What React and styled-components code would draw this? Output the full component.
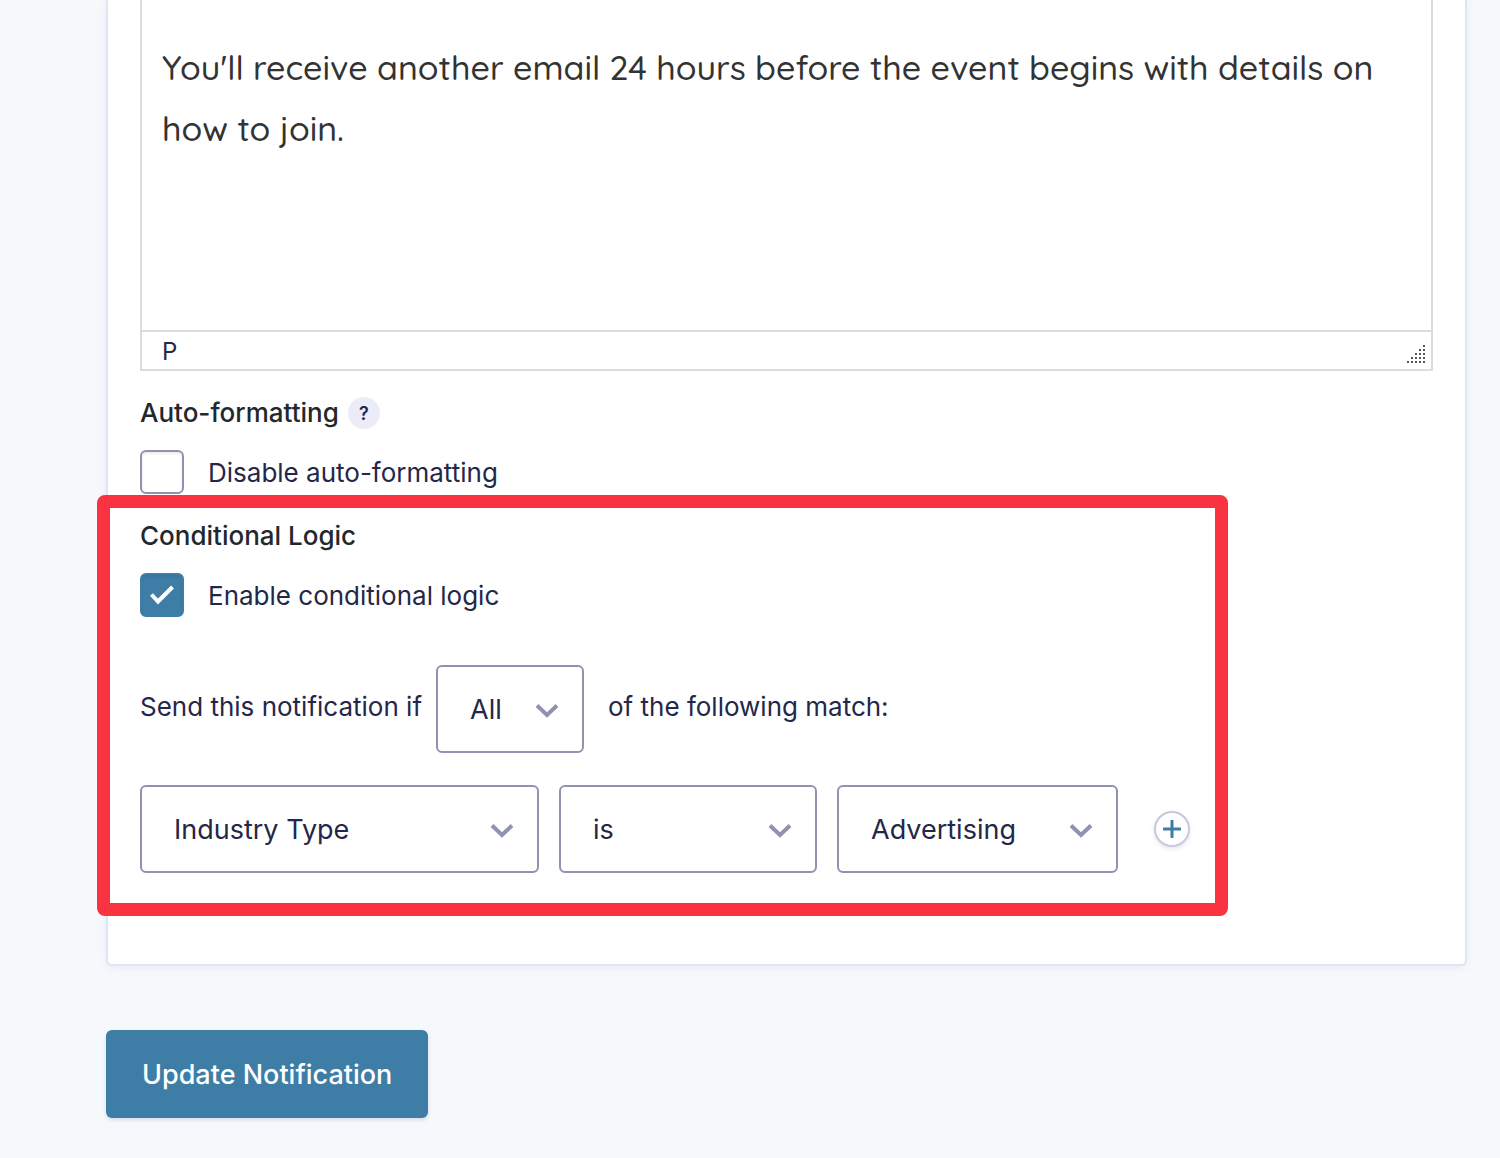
import { useState } from "react";
import styled, { createGlobalStyle } from "styled-components";

const GlobalStyle = createGlobalStyle`
    * {
        box-sizing: border-box;
    }
    body {
        margin: 0;
        background-color: #f6f9fc;
        color: #242748;
        font-family: Inter, "Liberation Sans", sans-serif;
        font-size: 26px;
        line-height: 32px;
    }
    button,
    select,
    textarea {
        font-family: inherit;
    }
`;

const Page = styled.main`
    padding: 0 33px 40px 106px;
`;

const Panel = styled.section`
    background-color: #ffffff;
    border: 2px solid #e3e5ee;
    border-top: none;
    border-radius: 0 0 6px 6px;
    box-shadow: 0 2px 8px rgba(58, 58, 135, 0.08);
    padding: 0 32px 91px;
`;

const Editor = styled.div`
    border: 2px solid #dcdcde;
    border-top: none;
`;

const Message = styled.textarea`
    display: block;
    width: 100%;
    height: 330px;
    padding: 37px 20px 0;
    border: none;
    outline: none;
    resize: none;
    background-color: transparent;
    color: #333333;
    font-family: Quicksand, Lato, sans-serif;
    font-size: 34px;
    font-weight: 500;
    line-height: 61px;
`;

const StatusBar = styled.div`
    display: flex;
    justify-content: space-between;
    align-items: center;
    height: 39px;
    padding: 2px 6px 0 20px;
    border-top: 2px solid #dcdcde;
    font-size: 24px;
    svg {
        margin-top: 4px;
    }
`;

const Setting = styled.div`
    position: relative;
    padding-top: 26px;
`;

const Heading = styled.h3`
    display: flex;
    align-items: center;
    gap: 9px;
    margin: 0 0 21px;
    color: #23282d;
    font-size: 26px;
    font-weight: 500;
    line-height: 32px;
`;

const Help = styled.button`
    width: 32px;
    height: 32px;
    padding: 0;
    border: none;
    border-radius: 50%;
    background-color: #ecebf8;
    color: #242748;
    font-size: 18px;
    font-weight: 600;
`;

const CheckRow = styled.label`
    display: flex;
    align-items: center;
    gap: 24px;
`;

const CheckText = styled.span`
    padding-top: 2px;
`;

const Tick = styled.input`
    appearance: none;
    flex: none;
    width: 44px;
    height: 44px;
    margin: 0;
    border: 2px solid #9092b2;
    border-radius: 6px;
    background-color: #ffffff;
    box-shadow: inset 0 2px 3px rgba(0, 0, 0, 0.08);
    &:checked {
        border-color: #3e7da6;
        background-color: #3e7da6;
    }
`;

const TickBox = styled.span`
    position: relative;
    display: flex;
    svg {
        position: absolute;
        inset: 0;
        pointer-events: none;
    }
`;

const Highlight = styled.div`
    position: absolute;
    inset: 1px 205px -43px -43px;
    border: 13px solid #fa3340;
    border-radius: 8px;
    pointer-events: none;
`;

const RuleText = styled.div`
    display: flex;
    align-items: center;
    margin-top: 48px;
`;

const RuleLabel = styled.span`
    padding-bottom: 4px;
    &:first-child {
        margin-right: 14px;
    }
    &:last-child {
        margin-left: 24px;
    }
`;

const Conditions = styled.div`
    display: flex;
    align-items: center;
    gap: 20px;
    margin-top: 32px;
`;

const SelectBox = styled.span`
    position: relative;
    display: flex;
    width: ${(props) => props.$width}px;
    svg {
        position: absolute;
        top: 38px;
        right: 25px;
        pointer-events: none;
    }
`;

const Select = styled.select`
    appearance: none;
    width: 100%;
    height: 88px;
    padding: 0 60px 0 32px;
    border: 2px solid #9092b2;
    border-radius: 6px;
    background-color: #ffffff;
    color: #242748;
    font-size: 27px;
`;

const AddButton = styled.button`
    display: flex;
    align-items: center;
    justify-content: center;
    width: 36px;
    height: 36px;
    margin-left: 16px;
    padding: 0;
    border: 2px solid #c8c9dd;
    border-radius: 50%;
    background-color: #ffffff;
    box-shadow: 0 2px 4px rgba(58, 58, 135, 0.12);
`;

const Submit = styled.button`
    height: 88px;
    margin-top: 64px;
    padding: 0 36px;
    border: none;
    border-radius: 6px;
    background-color: #3e7da6;
    box-shadow: 0 2px 4px rgba(58, 58, 135, 0.16);
    color: #ffffff;
    font-size: 27px;
    font-weight: 500;
`;

function ResizeGrip() {
    const dots = [];
    for (let row = 0; row < 5; row++) {
        for (let col = 4 - row; col < 5; col++) {
            dots.push([col * 4, row * 4]);
        }
    }
    return (
        <svg width="18" height="18" fill="#50575e" aria-hidden="true">
            {dots.map(([x, y]) => (
                <rect key={`${x}-${y}`} x={x} y={y} width="2" height="2" />
            ))}
        </svg>
    );
}

function Checkbox({ label, checked, onChange }) {
    return (
        <CheckRow>
            <TickBox>
                <Tick
                    type="checkbox"
                    checked={checked}
                    onChange={(e) => onChange(e.target.checked)}
                />
                {checked && (
                    <svg width="44" height="44" fill="none">
                        <path
                            d="M11.5 21.5 L18 28.5 L32.5 14"
                            stroke="#ffffff"
                            strokeWidth="4"
                        />
                    </svg>
                )}
            </TickBox>
            <CheckText>{label}</CheckText>
        </CheckRow>
    );
}

function Dropdown({ label, options, width }) {
    return (
        <SelectBox $width={width}>
            <Select aria-label={label}>
                {options.map((option) => (
                    <option key={option}>{option}</option>
                ))}
            </Select>
            <svg width="24" height="15" fill="none" aria-hidden="true">
                <path d="M2 2.5 L12 12 L22 2.5" stroke="#9092b2" strokeWidth="4" />
            </svg>
        </SelectBox>
    );
}

function App() {
    const [disabled, setDisabled] = useState(false);
    const [conditional, setConditional] = useState(true);

    return (
        <>
            <GlobalStyle />
            <Page>
                <Panel>
                    <Editor>
                        <Message
                            aria-label="Message"
                            spellCheck={false}
                            defaultValue="You'll receive another email 24 hours before the event begins with details on how to join."
                        />
                        <StatusBar>
                            P
                            <ResizeGrip />
                        </StatusBar>
                    </Editor>
                    <Setting>
                        <Heading>
                            Auto-formatting
                            <Help type="button">?</Help>
                        </Heading>
                        <Checkbox
                            label="Disable auto-formatting"
                            checked={disabled}
                            onChange={setDisabled}
                        />
                    </Setting>
                    <Setting>
                        <Highlight />
                        <Heading>Conditional Logic</Heading>
                        <Checkbox
                            label="Enable conditional logic"
                            checked={conditional}
                            onChange={setConditional}
                        />
                        {conditional && (
                            <>
                                <RuleText>
                                    <RuleLabel>Send this notification if</RuleLabel>
                                    <Dropdown label="Match" options={["All", "Any"]} width={148} />
                                    <RuleLabel>of the following match:</RuleLabel>
                                </RuleText>
                                <Conditions>
                                    <Dropdown label="Field" options={["Industry Type"]} width={399} />
                                    <Dropdown label="Operator" options={["is", "is not"]} width={258} />
                                    <Dropdown label="Value" options={["Advertising"]} width={281} />
                                    <AddButton type="button" aria-label="Add rule">
                                        <svg width="18" height="18" fill="none">
                                            <path
                                                d="M9 1 V17 M1 9 H17"
                                                stroke="#3e7da6"
                                                strokeWidth="3"
                                                strokeLinecap="round"
                                            />
                                        </svg>
                                    </AddButton>
                                </Conditions>
                            </>
                        )}
                    </Setting>
                </Panel>
                <Submit type="button">Update Notification</Submit>
            </Page>
        </>
    );
}

export default App;
